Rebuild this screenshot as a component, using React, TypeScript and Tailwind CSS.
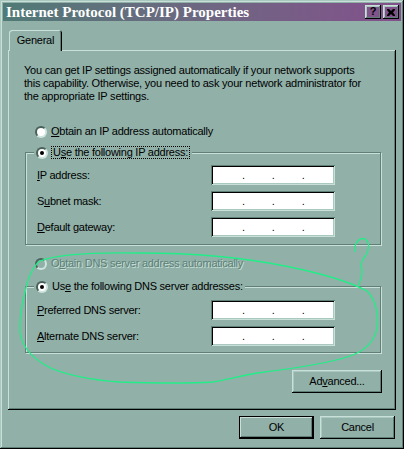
import React from "react";

const raised =
  "shadow-[inset_-1px_-1px_0_#000,inset_1px_1px_0_#c8e0d8,inset_-2px_-2px_0_#5f7f77,inset_2px_2px_0_#a8c8c0]";
const sunken =
  "shadow-[inset_1px_1px_0_#5f7f77,inset_-1px_-1px_0_#c8e0d8,inset_2px_2px_0_#000,inset_-2px_-2px_0_#a8c8c0]";

function Radio({ checked, disabled }: { checked?: boolean; disabled?: boolean }) {
  return (
    <span
      className={`w-[12px] h-[12px] rounded-full border-2 border-t-[#4a605a] border-l-[#4a605a] border-r-[#d0e4de] border-b-[#d0e4de] flex items-center justify-center shrink-0 ${
        disabled ? "bg-[#90b0a8]" : "bg-white"
      }`}
    >
      {checked && <span className="w-[4px] h-[4px] rounded-full bg-black" />}
    </span>
  );
}

function IpField() {
  return (
    <div className={`w-[124px] h-[20px] bg-white ${sunken} flex items-end pb-[4px] pl-[31px] gap-[27px] leading-none`}>
      <span>.</span>
      <span>.</span>
      <span>.</span>
    </div>
  );
}

function Row({ label, k, rest }: { label: string; k: string; rest: string }) {
  return (
    <div className="flex items-center justify-between h-[20px] pl-[11px] pr-[45px]">
      <span>
        {label}
        <u>{k}</u>
        {rest}
      </span>
      <IpField />
    </div>
  );
}

function Button({ children, primary, w }: { children: React.ReactNode; primary?: boolean; w: string }) {
  return (
    <div
      className={`${w} h-[23px] flex items-center justify-center ${
        primary
          ? "shadow-[inset_0_0_0_1px_#000,inset_-2px_-2px_0_#000,inset_2px_2px_0_#c8e0d8,inset_-3px_-3px_0_#5f7f77]"
          : raised
      }`}
    >
      {children}
    </div>
  );
}

export default function App() {
  return (
    <div className="relative w-[404px] h-[449px] bg-[#90b0a8] p-[3px] flex flex-col font-['Liberation_Sans',Arial,sans-serif] text-[11px] leading-[13px] tracking-[-0.25px] text-black shadow-[inset_-1px_-1px_0_#000,inset_1px_1px_0_#a8c8c0,inset_-2px_-2px_0_#5f7f77,inset_2px_2px_0_#c8e0d8]">
      {/* title bar */}
      <div className="h-[18px] flex items-center bg-gradient-to-r from-[#4f7a76] to-[#82508c] pl-[3px] pr-[2px]">
        <span className="flex-1 font-['Liberation_Serif',serif] font-bold text-[15px] tracking-normal leading-none text-white">
          Internet Protocol (TCP/IP) Properties
        </span>
        <div className={`w-[16px] h-[14px] ${raised} flex items-center justify-center font-bold text-[11px] leading-none pb-[1px]`}>?</div>
        <div className={`w-[16px] h-[14px] ml-[2px] ${raised} flex items-center justify-center`}>
          <svg width="8" height="7" viewBox="0 0 8 7">
            <path d="M0 0h2l2 2 2-2h2v1L6 3.5 8 6v1H6L4 5 2 7H0V6l2-2.5L0 1z" fill="#000" />
          </svg>
        </div>
      </div>

      {/* tabs + panel */}
      <div className="px-[5px] mt-[9px] flex flex-col">
        <div className="relative z-10 ml-[1px] w-[53px] h-[21px] -mb-[1px] bg-[#90b0a8] rounded-t-[3px] shadow-[inset_1px_1px_0_#c8e0d8,inset_-1px_0_0_#000,inset_-2px_0_0_#5f7f77] flex items-center justify-center pb-[1px]">
          General
        </div>
        <div className="h-[360px] shadow-[inset_-1px_-1px_0_#000,inset_1px_1px_0_#c8e0d8,inset_-2px_-2px_0_#5f7f77] flex flex-col">
          <p className="mt-[14px] pl-[16px] tracking-[-0.22px]">
            You can get IP settings assigned automatically if your network supports
            <br />
            this capability. Otherwise, you need to ask your network administrator for
            <br />
            the appropriate IP settings.
          </p>

          <div className="mt-[22px] ml-[27px] h-[13px] flex items-center gap-[4px]">
            <Radio />
            <span>
              <u>O</u>btain an IP address automatically
            </span>
          </div>

          <fieldset className="mt-[8px] ml-[17px] w-[356px] border border-[#5f7f77] shadow-[1px_1px_0_#c8e0d8,inset_1px_1px_0_#c8e0d8] pb-[7px]">
            <legend className="ml-[8px] px-[2px] bg-[#90b0a8] flex items-center gap-[3px]">
              <Radio checked />
              <span className="border border-dotted border-black px-[1px] leading-[11px]">
                U<u>s</u>e the following IP address:
              </span>
            </legend>
            <div className="mt-[6px] flex flex-col gap-[6px]">
              <Row label="" k="I" rest="P address:" />
              <Row label="S" k="u" rest="bnet mask:" />
              <Row label="" k="D" rest="efault gateway:" />
            </div>
          </fieldset>

          <div className="mt-[12px] ml-[27px] h-[13px] flex items-center gap-[4px] text-[#5f7f77] [text-shadow:1px_1px_0_#c8e0d8]">
            <Radio disabled />
            <span>
              O<u>b</u>tain DNS server address automatically
            </span>
          </div>

          <fieldset className="mt-[10px] ml-[17px] w-[356px] border border-[#5f7f77] shadow-[1px_1px_0_#c8e0d8,inset_1px_1px_0_#c8e0d8] pb-[6px]">
            <legend className="ml-[8px] px-[2px] bg-[#90b0a8] flex items-center gap-[4px]">
              <Radio checked />
              <span>
                Us<u>e</u> the following DNS server addresses:
              </span>
            </legend>
            <div className="mt-[7px] flex flex-col gap-[6px]">
              <Row label="" k="P" rest="referred DNS server:" />
              <Row label="" k="A" rest="lternate DNS server:" />
            </div>
          </fieldset>

          <div className="mt-[17px] pr-[14px] flex justify-end">
            <Button w="w-[90px]">
              <span>
                Ad<u>v</u>anced...
              </span>
            </Button>
          </div>
        </div>
      </div>

      {/* dialog buttons */}
      <div className="mt-[6px] pr-[6px] flex justify-end gap-[6px]">
        <Button w="w-[75px]" primary>
          OK
        </Button>
        <Button w="w-[75px]">Cancel</Button>
      </div>

      {/* hand-drawn annotation */}
      <svg className="absolute left-0 top-0 pointer-events-none" width="404" height="449" viewBox="0 0 404 449" fill="none">
        <path
          d="M25 292 C28 278 33 266 40 261 C55 255 90 252 140 253 C190 253 240 257 285 266 C320 273 350 282 367 291 C376 300 379 315 377 328 C375 340 367 350 350 356 C330 363 290 369 257 373 C240 376 225 380 213 382 C180 384 150 383 120 382 C90 380 60 374 45 365 C30 356 22 345 20 333 C19 318 22 304 25 292"
          stroke="#22ee88"
          strokeWidth="1.3"
        />
        <path
          d="M355 252 C354 242 360 237 365 239 C370 242 369 250 366 255 C362 260 360 264 362 270 C363 275 360 279 359 285"
          stroke="#22ee88"
          strokeWidth="1.3"
        />
      </svg>
    </div>
  );
}
